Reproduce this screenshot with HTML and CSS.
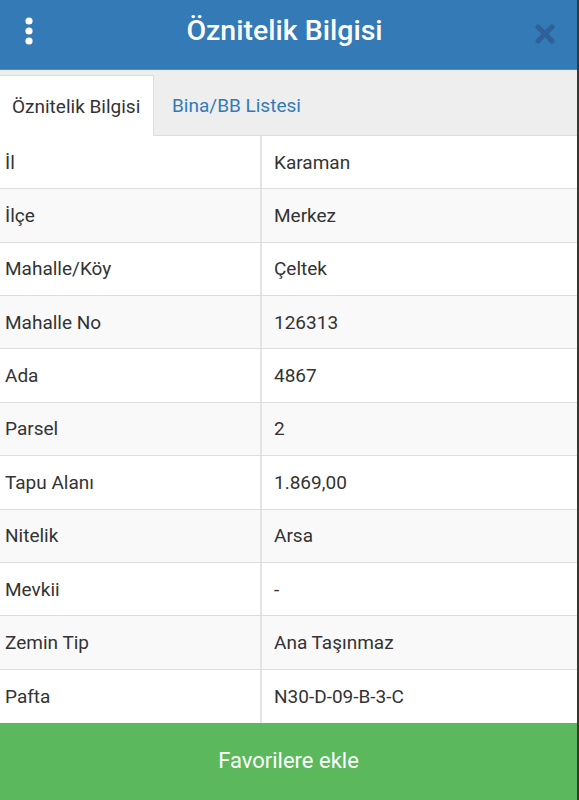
FILE: index.html
```html
<!DOCTYPE html>
<html lang="tr">
<head>
    <meta charset="UTF-8">
    <meta name="viewport" content="width=device-width, initial-scale=1.0">
    <title>Öznitelik Bilgisi</title>
    <link rel="stylesheet" href="styles.css">
</head>
<body>
    <div class="panel">
        <div class="header">
            <span class="menu">
                <svg width="10" height="28" viewBox="0 0 10 28">
                    <circle cx="5" cy="4" r="3.6" fill="#fff"/>
                    <circle cx="5" cy="14" r="3.6" fill="#fff"/>
                    <circle cx="5" cy="24" r="3.6" fill="#fff"/>
                </svg>
            </span>
            <h1>Öznitelik Bilgisi</h1>
            <span class="close">
                <svg width="20" height="20" viewBox="0 0 20 20">
                    <path d="M3 3 L17 17 M17 3 L3 17" stroke="#2d6197" stroke-width="5" stroke-linecap="round"/>
                </svg>
            </span>
        </div>

        <ul class="tabs">
            <li class="active">Öznitelik Bilgisi</li>
            <li>Bina/BB Listesi</li>
        </ul>

        <div class="info">
            <div class="row"><span>İl</span><span>Karaman</span></div>
            <div class="row"><span>İlçe</span><span>Merkez</span></div>
            <div class="row"><span>Mahalle/Köy</span><span>Çeltek</span></div>
            <div class="row"><span>Mahalle No</span><span>126313</span></div>
            <div class="row"><span>Ada</span><span>4867</span></div>
            <div class="row"><span>Parsel</span><span>2</span></div>
            <div class="row"><span>Tapu Alanı</span><span>1.869,00</span></div>
            <div class="row"><span>Nitelik</span><span>Arsa</span></div>
            <div class="row"><span>Mevkii</span><span>-</span></div>
            <div class="row"><span>Zemin Tip</span><span>Ana Taşınmaz</span></div>
            <div class="row"><span>Pafta</span><span>N30-D-09-B-3-C</span></div>
        </div>

        <div class="fav-button">Favorilere ekle</div>
    </div>
</body>
</html>
```

FILE: styles.css
```css
body {
    margin: 0;
    background-color: #3a3631;
    font-family: Roboto, "Noto Sans", sans-serif;
    color: #333;
}

.panel {
    width: 577px;
    height: 800px;
    background-color: #fff;
    display: flex;
    flex-direction: column;
}

.header {
    height: 70px;
    background-color: #337ab7;
    border-bottom: 1px solid #4a8cc4;
    display: flex;
    align-items: center;
    justify-content: space-between;
    padding: 0 22px 8px 24px;
    box-sizing: border-box;
}

.header h1 {
    margin: 0;
    color: #fff;
    font-size: 28.5px;
    font-weight: 500;
}

.menu svg,
.close svg {
    display: block;
}

.close {
    margin-top: 6px;
}

.tabs {
    list-style: none;
    margin: 0;
    padding: 5px 0 0 0;
    height: 66px;
    box-sizing: border-box;
    background-color: #eee;
    border-bottom: 1px solid #ddd;
    display: flex;
}

.tabs li {
    padding: 0 12px 0 18px;
    display: flex;
    align-items: center;
    font-size: 19px;
    color: #337ab7;
}

.tabs li.active {
    background-color: #fff;
    color: #333;
    border: 1px solid #ddd;
    border-bottom: none;
    border-left: none;
    padding: 0 12px;
    margin-bottom: -1px;
    width: 154px;
    box-sizing: border-box;
}

.info {
    flex: 1;
}

.row {
    display: grid;
    grid-template-columns: 260px 1fr;
    height: 53.36px;
    box-sizing: border-box;
    border-bottom: 1px solid #ddd;
    font-size: 19px;
}

.row:nth-child(even) {
    background-color: #f9f9f9;
}

.row span {
    display: flex;
    align-items: center;
    padding-left: 5px;
}

.row span + span {
    border-left: 2px solid #e4e4e4;
    padding-left: 12px;
}

.row:last-child {
    border-bottom: none;
}

.fav-button {
    height: 77px;
    background-color: #5cb85c;
    color: #fff;
    font-size: 22px;
    display: flex;
    align-items: center;
    justify-content: center;
    padding-bottom: 2px;
    box-sizing: border-box;
}
```
